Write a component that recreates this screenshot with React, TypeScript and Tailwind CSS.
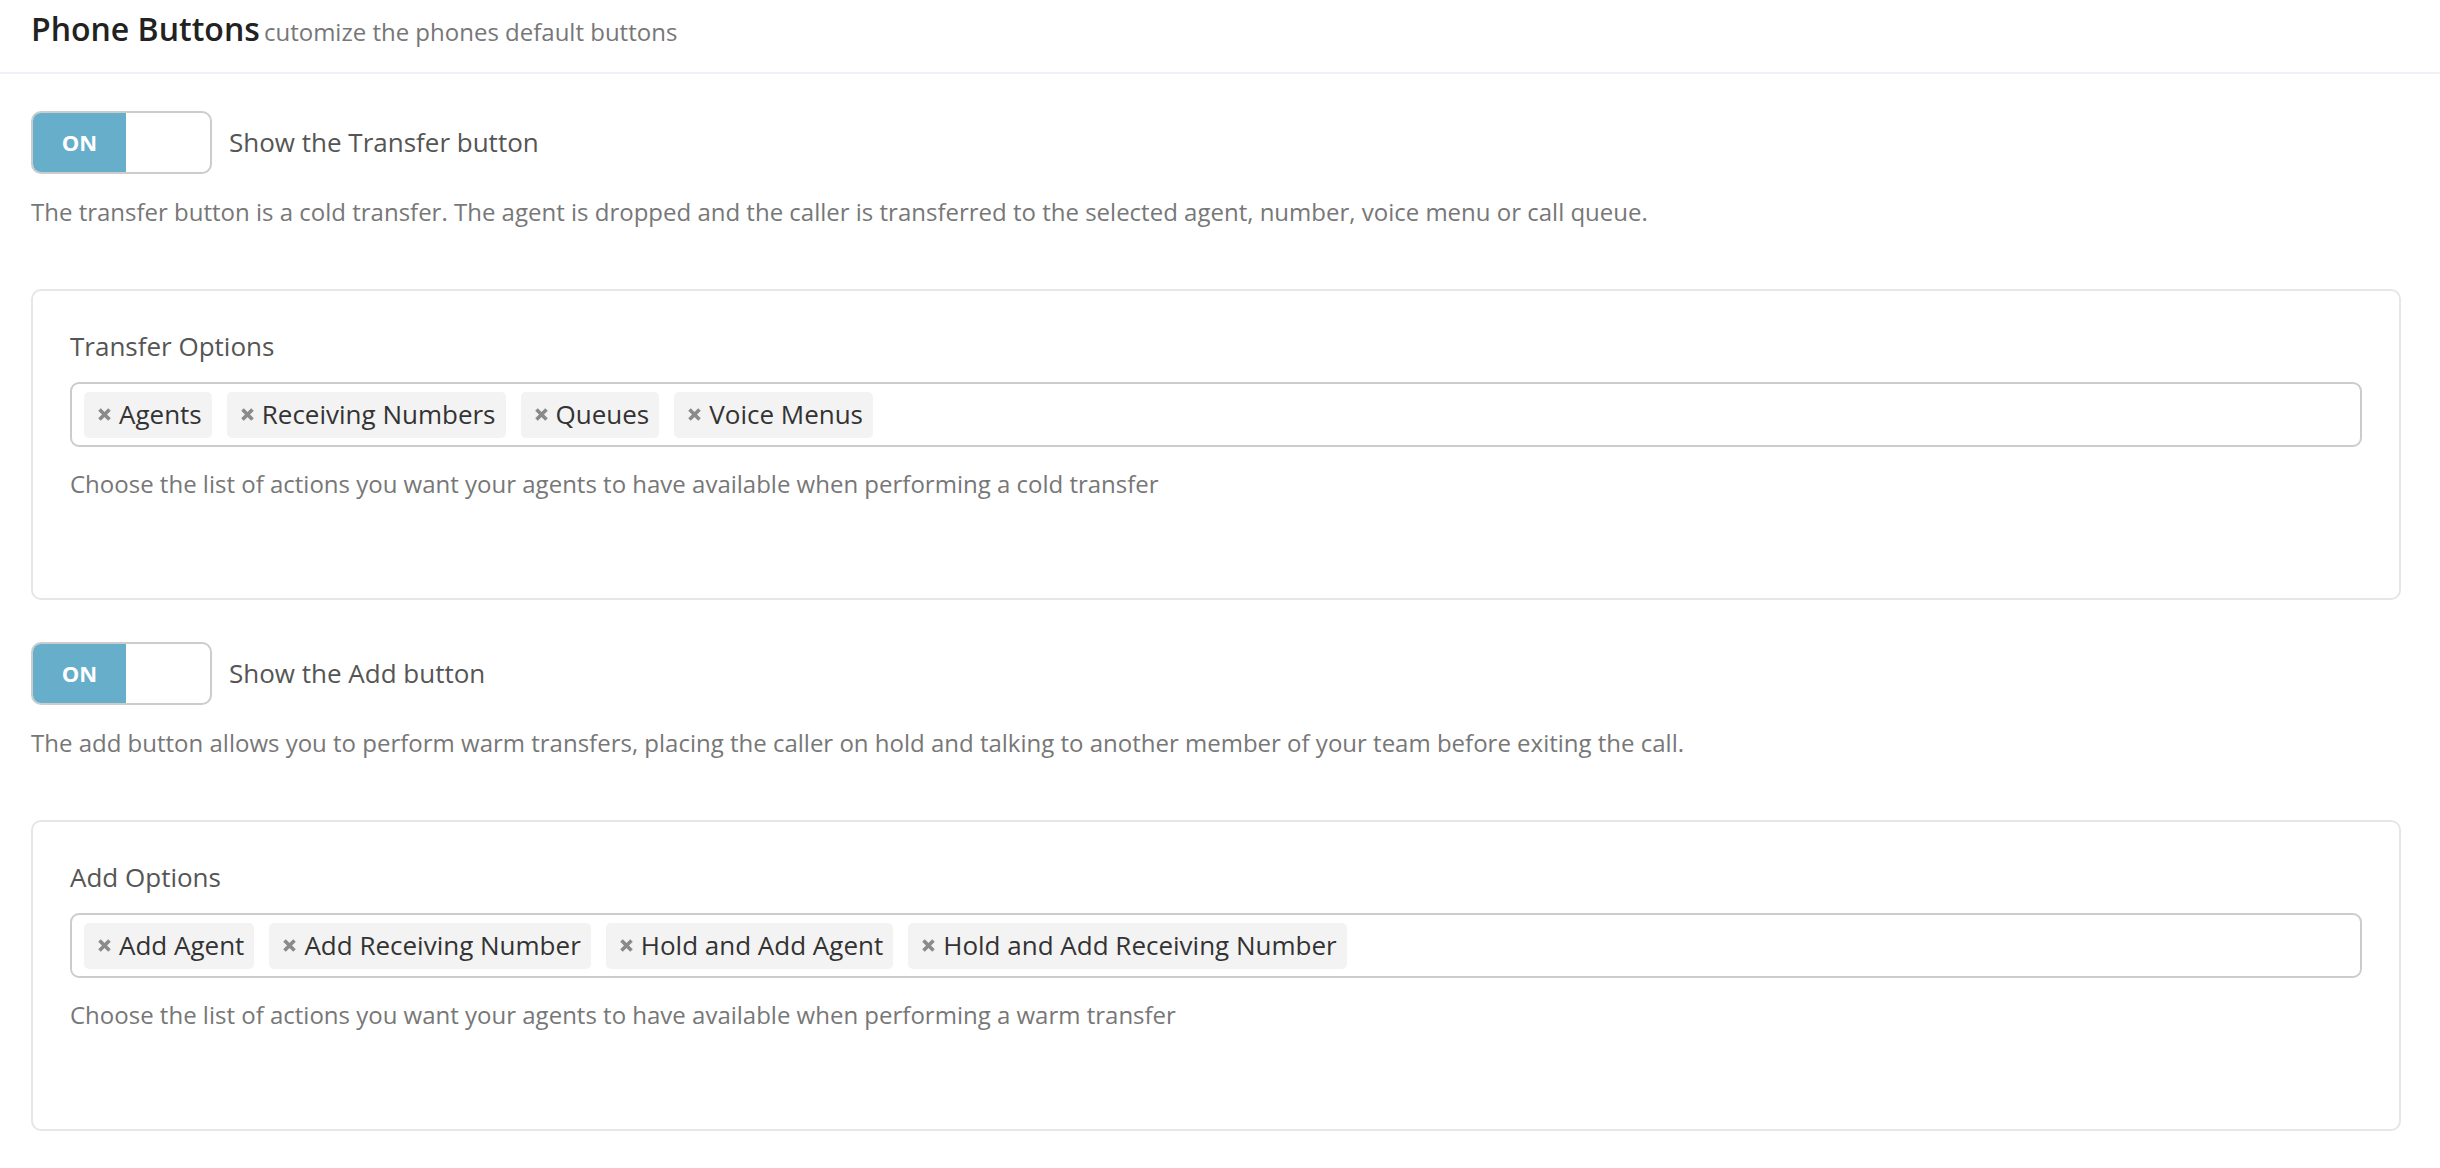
import React from 'react';

const TRANSFER_OPTIONS = ['Agents', 'Receiving Numbers', 'Queues', 'Voice Menus'];
const ADD_OPTIONS = ['Add Agent', 'Add Receiving Number', 'Hold and Add Agent', 'Hold and Add Receiving Number'];

function Toggle() {
  return (
    <div className="flex h-[63px] w-[181px] overflow-hidden rounded-[10px] border-2 border-[#cccccc] bg-white">
      <div className="flex w-[93px] items-center justify-center bg-[#67aecb] text-[22px] font-bold text-white">
        ON
      </div>
    </div>
  );
}

function Tag({ label }: { label: string }) {
  return (
    <span className="flex h-[46px] items-center rounded-[5px] bg-[#f3f3f3] pl-[13px] pr-[10px] text-[26px] text-[#333333]">
      <svg width="15" height="15" viewBox="0 0 15 15" className="mr-[7px] shrink-0">
        <path d="M2.5 2.5 L12.5 12.5 M12.5 2.5 L2.5 12.5" stroke="#8a8a8a" strokeWidth="3.6" />
      </svg>
      {label}
    </span>
  );
}

function OptionsCard({ title, options, help }: { title: string; options: string[]; help: string }) {
  return (
    <div className="rounded-[10px] border-2 border-[#e6e6e6] bg-white px-[37px] pb-[97px] pt-[37px]">
      <div className="text-[26px] leading-[36px] text-[#555555]">{title}</div>
      <div className="mt-[18px] flex h-[65px] items-center gap-[15px] rounded-[9px] border-2 border-[#cccccc] px-[12px]">
        {options.map((o) => (
          <Tag key={o} label={o} />
        ))}
      </div>
      <p className="mt-[20px] text-[24px] leading-[34px] text-[#777777]">{help}</p>
    </div>
  );
}

function ToggleRow({ label, desc }: { label: string; desc: string }) {
  return (
    <div>
      <div className="flex items-center gap-[17px]">
        <Toggle />
        <span className="text-[26px] text-[#555555]">{label}</span>
      </div>
      <p className="mt-[21px] text-[24px] leading-[34px] text-[#777777]">{desc}</p>
    </div>
  );
}

export default function App() {
  return (
    <div className="min-h-screen bg-white font-['Open_Sans',sans-serif]">
      <div className="border-b-2 border-[#eef1fb] pb-[15px] pl-[31px] pt-[7px]">
        <h1 className="leading-[44px]">
          <span className="text-[32px] font-semibold text-[#222222]">Phone Buttons</span>{' '}
          <span className="text-[24px] text-[#777777]">cutomize the phones default buttons</span>
        </h1>
      </div>

      <div className="pb-[40px] pl-[31px] pr-[39px] pt-[37px]">
        <ToggleRow
          label="Show the Transfer button"
          desc="The transfer button is a cold transfer. The agent is dropped and the caller is transferred to the selected agent, number, voice menu or call queue."
        />
        <div className="mt-[60px]">
          <OptionsCard
            title="Transfer Options"
            options={TRANSFER_OPTIONS}
            help="Choose the list of actions you want your agents to have available when performing a cold transfer"
          />
        </div>

        <div className="mt-[42px]">
          <ToggleRow
            label="Show the Add button"
            desc="The add button allows you to perform warm transfers, placing the caller on hold and talking to another member of your team before exiting the call."
          />
        </div>
        <div className="mt-[60px]">
          <OptionsCard
            title="Add Options"
            options={ADD_OPTIONS}
            help="Choose the list of actions you want your agents to have available when performing a warm transfer"
          />
        </div>
      </div>
    </div>
  );
}
